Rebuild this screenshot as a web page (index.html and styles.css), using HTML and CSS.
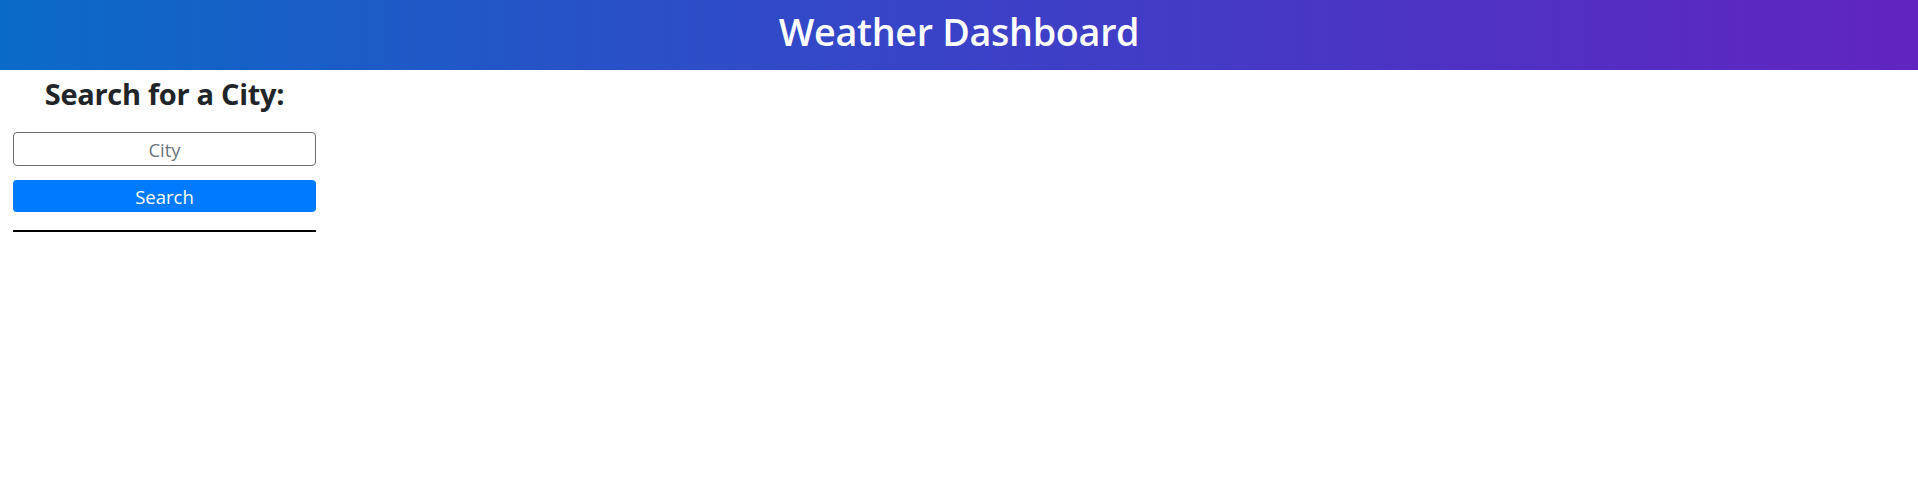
FILE: index.html
```html
<!DOCTYPE html>
<html lang="en">
<head>
<meta charset="utf-8">
<title>Weather Dashboard</title>
<link rel="stylesheet" href="styles.css">
</head>
<body>
<header class="topbar">
  <h1 class="title">Weather Dashboard</h1>
</header>
<main class="layout">
  <aside class="sidebar">
    <h2 class="side-heading">Search for a City:</h2>
    <input class="city-input" type="text" placeholder="City">
    <button class="search-btn" type="button">Search</button>
    <hr class="divider">
  </aside>
</main>
</body>
</html>
```
FILE: styles.css
```css
* { box-sizing: border-box; }
body {
  margin: 0;
  font-family: "Open Sans", "Noto Sans", sans-serif;
  color: #212529;
  background: #fff;
}
.topbar {
  height: 70px;
  padding-bottom: 7px;
  display: flex;
  align-items: center;
  justify-content: center;
  background: linear-gradient(to right, #0a6bc6, #3a42c8 50%, #6124c1);
}
.title {
  margin: 0;
  color: #fff;
  font-size: 37.7px;
  font-weight: 600;
  letter-spacing: -0.3px;
}
.layout {
  display: flex;
  padding: 0 13px;
}
.sidebar {
  width: 303px;
  display: flex;
  flex-direction: column;
}
.side-heading {
  margin: 6px 0 0;
  text-align: center;
  font-size: 29px;
  font-weight: 700;
  line-height: 36px;
  color: #212529;
  letter-spacing: -0.3px;
}
.city-input {
  margin-top: 20px;
  height: 34px;
  width: 100%;
  border: 1px solid #6b6b6b;
  border-radius: 4px;
  text-align: center;
  font-family: inherit;
  font-size: 18.5px;
  color: #495057;
}
.city-input::placeholder { color: #6c757d; }
.search-btn {
  margin-top: 14px;
  height: 32px;
  width: 100%;
  border: none;
  border-radius: 4px;
  background: #007bff;
  color: #fff;
  font-family: inherit;
  font-size: 18.5px;
  padding: 0;
}
.divider {
  margin: 18px 0 0;
  border: none;
  border-top: 2px solid #000;
  height: 0;
}
```
